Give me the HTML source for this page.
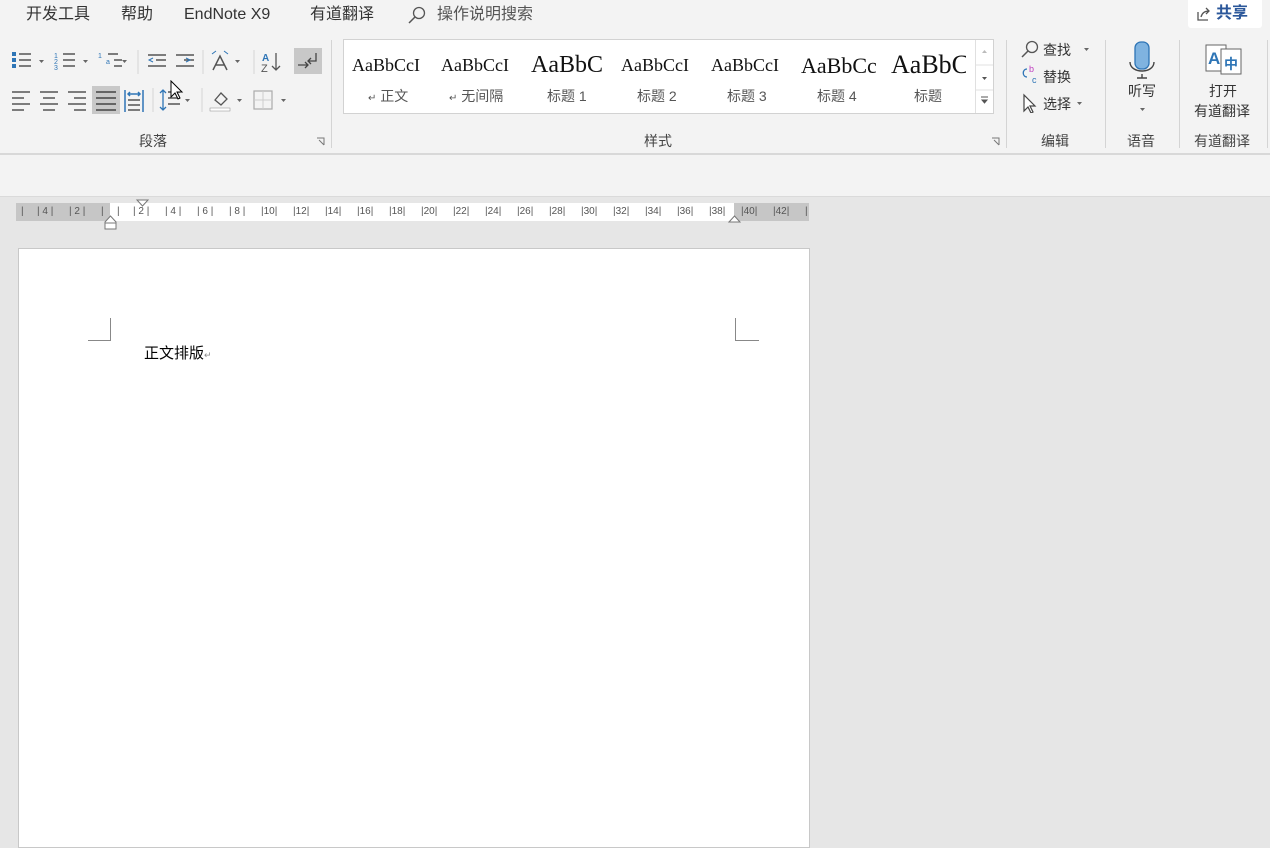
<!DOCTYPE html>
<html><head><meta charset="utf-8"><style>
*{margin:0;padding:0;box-sizing:border-box}
body{width:1270px;height:840px;overflow:hidden;background:#e6e6e6;font-family:"Liberation Sans","Noto Sans CJK SC",sans-serif;position:relative;color:#444;line-height:1.2}
.a{position:absolute}
.t{font-size:16px;color:#333;top:6px;line-height:18px}
.lbl{font-size:14px;color:#444;top:133px;line-height:17px}
.sep{position:absolute;width:1px;background:#d4d4d4}
.st{position:absolute;top:50px;font-family:"Liberation Serif",serif;color:#111;white-space:nowrap;overflow:hidden;line-height:1.1}
.sl{position:absolute;top:88px;font-size:14px;color:#555;white-space:nowrap;line-height:17px}
.rk{position:absolute;top:206px;font-size:10px;color:#555;white-space:pre;line-height:12px;font-family:"Liberation Sans",sans-serif}
.cl{fill:none;stroke:#555;stroke-width:1.3}
</style></head><body>
<div class="a" style="left:0;top:0;width:1270px;height:153px;background:#f3f3f3"></div>
<div class="a" style="left:0;top:153px;width:1270px;height:2px;background:#d8d8d8"></div>
<div class="a" style="left:0;top:155px;width:1270px;height:42px;background:#f3f3f3;border-bottom:1px solid #dadada"></div>

<div class="a t" style="left:26px">开发工具</div>
<div class="a t" style="left:121px">帮助</div>
<div class="a t" style="left:184px">EndNote X9</div>
<div class="a t" style="left:310px">有道翻译</div>
<svg class="a" style="left:406px;top:5px" width="22" height="20"><circle cx="13" cy="8" r="5.5" class="cl"/><line x1="9" y1="12" x2="3" y2="18" stroke="#555" stroke-width="1.5"/></svg>
<div class="a t" style="left:437px;color:#555">操作说明搜索</div>
<div class="a" style="left:1188px;top:0;width:74px;height:28px;background:#fff;border-radius:0 0 3px 3px"></div>
<svg class="a" style="left:1196px;top:6px" width="16" height="16"><path d="M2 6v8h10" class="cl"/><path d="M5 11c1-4 4-6 8-6M10 2l3 3-3 3" class="cl"/></svg>
<div class="a" style="left:1216px;top:5px;font-size:16px;font-weight:bold;color:#2b579a;line-height:18px">共享</div>

<svg class="a" style="left:10px;top:48px" width="320" height="66">
<g fill="#2e75b6"><rect x="2" y="4" width="4" height="4"/><rect x="2" y="10" width="4" height="4"/><rect x="2" y="16" width="4" height="4"/></g>
<g stroke="#555" stroke-width="1.5"><line x1="9" y1="6" x2="21" y2="6"/><line x1="9" y1="12" x2="21" y2="12"/><line x1="9" y1="18" x2="21" y2="18"/>
<line x1="53" y1="6" x2="65" y2="6"/><line x1="53" y1="12" x2="65" y2="12"/><line x1="53" y1="18" x2="65" y2="18"/>
<line x1="98" y1="6" x2="108" y2="6"/><line x1="104" y1="12" x2="112" y2="12"/><line x1="104" y1="18" x2="112" y2="18"/>
<line x1="138" y1="7" x2="156" y2="7"/><line x1="146" y1="12" x2="156" y2="12"/><line x1="138" y1="18" x2="156" y2="18"/>
<line x1="166" y1="7" x2="184" y2="7"/><line x1="174" y1="12" x2="184" y2="12"/><line x1="166" y1="18" x2="184" y2="18"/></g>
<text x="44" y="10" font-size="7" fill="#2e75b6">1</text><text x="44" y="16" font-size="7" fill="#2e75b6">2</text><text x="44" y="22" font-size="7" fill="#2e75b6">3</text>
<text x="88" y="10" font-size="7" fill="#2e75b6">1</text><text x="96" y="16" font-size="7" fill="#2e75b6">a</text>
<path d="M143 10l-4 2 4 2M176 10l4 2-4 2" stroke="#2e75b6" fill="none"/>
<path d="M203 22l7-14 7 14M205 17h10" stroke="#555" fill="none" stroke-width="1.5"/><path d="M202 6l4-3M218 6l-4-3" stroke="#2e75b6" fill="none"/>
<text x="252" y="13" font-size="10" fill="#2e75b6" font-weight="bold">A</text><text x="251" y="24" font-size="11" fill="#555">Z</text><path d="M266 5v17M262 18l4 4 4-4" stroke="#555" fill="none" stroke-width="1.3"/>
<rect x="284" y="0" width="28" height="26" fill="#c8c8c8"/><path d="M288 17h10M295 14l3 3-3 3M306 5v8h-8M301 10l-3 3 3 3" stroke="#444" fill="none" stroke-width="1.3"/>
<g fill="#666"><path d="M29 12h5l-2.5 3z"/><path d="M73 12h5l-2.5 3z"/><path d="M112 12h5l-2.5 3z"/><path d="M225 12h5l-2.5 3z"/></g>
<g stroke="#d4d4d4"><line x1="128" y1="2" x2="128" y2="26"/><line x1="193" y1="2" x2="193" y2="26"/><line x1="244" y1="2" x2="244" y2="26"/></g>
<g stroke="#555" stroke-width="1.5">
<line x1="2" y1="44" x2="20" y2="44"/><line x1="2" y1="50" x2="14" y2="50"/><line x1="2" y1="56" x2="20" y2="56"/><line x1="2" y1="62" x2="14" y2="62"/>
<line x1="30" y1="44" x2="48" y2="44"/><line x1="33" y1="50" x2="45" y2="50"/><line x1="30" y1="56" x2="48" y2="56"/><line x1="33" y1="62" x2="45" y2="62"/>
<line x1="58" y1="44" x2="76" y2="44"/><line x1="64" y1="50" x2="76" y2="50"/><line x1="58" y1="56" x2="76" y2="56"/><line x1="64" y1="62" x2="76" y2="62"/></g>
<rect x="82" y="38" width="28" height="28" fill="#c8c8c8"/>
<g stroke="#444" stroke-width="1.5"><line x1="86" y1="44" x2="106" y2="44"/><line x1="86" y1="50" x2="106" y2="50"/><line x1="86" y1="56" x2="106" y2="56"/><line x1="86" y1="62" x2="106" y2="62"/></g>
<g stroke="#2e75b6" stroke-width="1.5" fill="none"><line x1="115" y1="42" x2="115" y2="64"/><line x1="133" y1="42" x2="133" y2="64"/><path d="M118 46h12M120 44l-2 2 2 2M128 44l2 2-2 2"/></g>
<g stroke="#555" stroke-width="1.5"><line x1="118" y1="52" x2="130" y2="52"/><line x1="118" y1="57" x2="130" y2="57"/><line x1="118" y1="62" x2="130" y2="62"/>
<line x1="158" y1="44" x2="170" y2="44"/><line x1="158" y1="50" x2="170" y2="50"/><line x1="158" y1="56" x2="170" y2="56"/></g>
<path d="M153 42v20M150 45l3-3 3 3M150 59l3 3 3-3" stroke="#2e75b6" fill="none" stroke-width="1.3"/>
<path d="M205 52l6-7 6 6-6 6z" stroke="#555" fill="none" stroke-width="1.3"/><rect x="200" y="60" width="20" height="3" fill="#fff" stroke="#888" stroke-width=".5"/>
<rect x="244" y="43" width="18" height="18" fill="none" stroke="#aaa" stroke-width="1.2"/><path d="M253 43v18M244 52h18" stroke="#ccc"/>
<g fill="#666"><path d="M175 51h5l-2.5 3z"/><path d="M227 51h5l-2.5 3z"/><path d="M271 51h5l-2.5 3z"/></g>
<g stroke="#d4d4d4"><line x1="143" y1="40" x2="143" y2="64"/><line x1="192" y1="40" x2="192" y2="64"/></g>
</svg>
<div class="a lbl" style="left:139px">段落</div>
<svg class="a" style="left:316px;top:137px" width="10" height="10"><path d="M1 1h7v7M3 3l5 5" stroke="#777" fill="none"/></svg>
<div class="sep" style="left:331px;top:40px;height:108px"></div>

<div class="a" style="left:343px;top:39px;width:651px;height:75px;background:#fff;border:1px solid #d2d2d2"></div>
<div class="a" style="left:975px;top:40px;width:18px;height:73px;border-left:1px solid #e0e0e0"></div>
<svg class="a" style="left:976px;top:40px" width="17" height="73"><path d="M6 13h5l-2.5-3z" fill="#bbb"/><path d="M6 37h5l-2.5 3z" fill="#555"/><line x1="0" y1="25" x2="17" y2="25" stroke="#e0e0e0"/><line x1="0" y1="50" x2="17" y2="50" stroke="#e0e0e0"/><path d="M5 57h7M6 60h5l-2.5 3z" stroke="#555" fill="#555"/></svg>
<div class="st" style="left:352px;font-size:18px;top:56px">AaBbCcI</div>
<div class="st" style="left:441px;font-size:18px;top:56px">AaBbCcI</div>
<div class="st" style="left:531px;font-size:24px;top:52px">AaBbC</div>
<div class="st" style="left:621px;font-size:18px;top:56px">AaBbCcI</div>
<div class="st" style="left:711px;font-size:18px;top:56px">AaBbCcI</div>
<div class="st" style="left:801px;font-size:22px;top:54px;width:75px">AaBbCc</div>
<div class="st" style="left:891px;font-size:26px;top:51px;width:75px">AaBbC</div>
<div class="sl" style="left:368px"><span style="font-size:10px">↵</span> 正文</div>
<div class="sl" style="left:449px"><span style="font-size:10px">↵</span> 无间隔</div>
<div class="sl" style="left:547px">标题 1</div>
<div class="sl" style="left:637px">标题 2</div>
<div class="sl" style="left:727px">标题 3</div>
<div class="sl" style="left:817px">标题 4</div>
<div class="sl" style="left:914px">标题</div>
<div class="a lbl" style="left:644px">样式</div>
<svg class="a" style="left:991px;top:137px" width="10" height="10"><path d="M1 1h7v7M3 3l5 5" stroke="#777" fill="none"/></svg>
<div class="sep" style="left:1006px;top:40px;height:108px"></div>

<svg class="a" style="left:1020px;top:39px" width="20" height="74">
<circle cx="12" cy="8" r="5.5" class="cl"/><line x1="8" y1="12" x2="2" y2="18" stroke="#555" stroke-width="1.5"/>
<text x="9" y="33" font-size="9" fill="#c040c0">b</text><text x="12" y="44" font-size="9" fill="#2e75b6">c</text><path d="M7 30c-5 0-5 8 0 8" stroke="#2e75b6" fill="none" stroke-width="1.3"/>
<path d="M4 56l0 16 4-4 3 6 2-1-3-6 5 0z" stroke="#444" fill="#fff" stroke-width="1.2"/>
</svg>
<div class="a" style="left:1043px;top:42px;font-size:14px;color:#333;line-height:17px">查找</div>
<div class="a" style="left:1043px;top:69px;font-size:14px;color:#333;line-height:17px">替换</div>
<div class="a" style="left:1043px;top:96px;font-size:14px;color:#333;line-height:17px">选择</div>
<svg class="a" style="left:1076px;top:44px" width="20" height="62"><path d="M8 4h5l-2.5 3z" fill="#666"/><path d="M1 58h5l-2.5 3z" fill="#666"/></svg>
<div class="a lbl" style="left:1041px">编辑</div>
<div class="sep" style="left:1105px;top:40px;height:108px"></div>

<svg class="a" style="left:1126px;top:40px" width="34" height="40"><rect x="9" y="2" width="14" height="27" rx="6" fill="#7fb3e0" stroke="#2e75b6" stroke-width="1.3"/><path d="M4 22c0 12 24 12 24 0M16 34v4M11 38h10" stroke="#444" fill="none" stroke-width="1.4"/></svg>
<div class="a" style="left:1128px;top:83px;font-size:14px;color:#333;line-height:17px">听写</div>
<svg class="a" style="left:1139px;top:107px" width="8" height="6"><path d="M1 1h5l-2.5 3z" fill="#666"/></svg>
<div class="a lbl" style="left:1127px">语音</div>
<div class="sep" style="left:1179px;top:40px;height:108px"></div>

<svg class="a" style="left:1204px;top:43px" width="40" height="34"><rect x="2" y="2" width="20" height="26" fill="#fff" stroke="#666"/><rect x="17" y="6" width="20" height="25" fill="#fff" stroke="#666"/><text x="4" y="21" font-size="17" font-weight="bold" fill="#2e75b6" font-family="Liberation Sans">A</text><text x="20" y="26" font-size="14" font-weight="bold" fill="#2e75b6" font-family="Noto Sans CJK SC">中</text></svg>
<div class="a" style="left:1209px;top:83px;font-size:14px;color:#333;line-height:17px">打开</div>
<div class="a" style="left:1194px;top:103px;font-size:14px;color:#333;line-height:17px">有道翻译</div>
<div class="a lbl" style="left:1194px">有道翻译</div>
<div class="sep" style="left:1267px;top:40px;height:108px"></div>

<div class="a" style="left:16px;top:203px;width:793px;height:18px;background:#c6c6c6"></div>
<div class="a" style="left:110px;top:203px;width:624px;height:18px;background:#fff"></div>
<div class="rk" style="left:21px">|</div>
<div class="rk" style="left:37px">| 4 |</div>
<div class="rk" style="left:69px">| 2 |</div>
<div class="rk" style="left:101px">|</div>
<div class="rk" style="left:117px">|</div>
<div class="rk" style="left:133px">| 2 |</div>
<div class="rk" style="left:165px">| 4 |</div>
<div class="rk" style="left:197px">| 6 |</div>
<div class="rk" style="left:229px">| 8 |</div>
<div class="rk" style="left:261px">|10|</div><div class="rk" style="left:293px">|12|</div><div class="rk" style="left:325px">|14|</div><div class="rk" style="left:357px">|16|</div><div class="rk" style="left:389px">|18|</div><div class="rk" style="left:421px">|20|</div><div class="rk" style="left:453px">|22|</div><div class="rk" style="left:485px">|24|</div><div class="rk" style="left:517px">|26|</div><div class="rk" style="left:549px">|28|</div><div class="rk" style="left:581px">|30|</div><div class="rk" style="left:613px">|32|</div><div class="rk" style="left:645px">|34|</div><div class="rk" style="left:677px">|36|</div><div class="rk" style="left:709px">|38|</div><div class="rk" style="left:741px">|40|</div><div class="rk" style="left:773px">|42|</div><div class="rk" style="left:805px">|</div>
<svg class="a" style="left:104px;top:199px" width="640" height="32"><path d="M33 1h11l-5.5 6z" fill="#fff" stroke="#777"/><path d="M1 23l5.5-6 5.5 6v7H1z M1 24h11" fill="#fff" stroke="#777"/><path d="M625 23l5.5-6 5.5 6z" fill="#fff" stroke="#777"/></svg>

<div class="a" style="left:18px;top:248px;width:792px;height:600px;background:#fff;border:1px solid #c8c8c8"></div>
<div class="a" style="left:110px;top:318px;width:1px;height:23px;background:#888"></div>
<div class="a" style="left:88px;top:340px;width:23px;height:1px;background:#888"></div>
<div class="a" style="left:735px;top:318px;width:1px;height:23px;background:#888"></div>
<div class="a" style="left:735px;top:340px;width:24px;height:1px;background:#888"></div>
<div class="a" style="left:144px;top:345px;font-size:15px;color:#000;line-height:18px">正文排版<span style="font-size:9px;color:#888">↵</span></div>

<svg class="a" style="left:170px;top:80px" width="14" height="22"><path d="M1 1v16l4-4 3 6 2-1-3-6h5z" fill="#fff" stroke="#000"/></svg>
</body></html>
